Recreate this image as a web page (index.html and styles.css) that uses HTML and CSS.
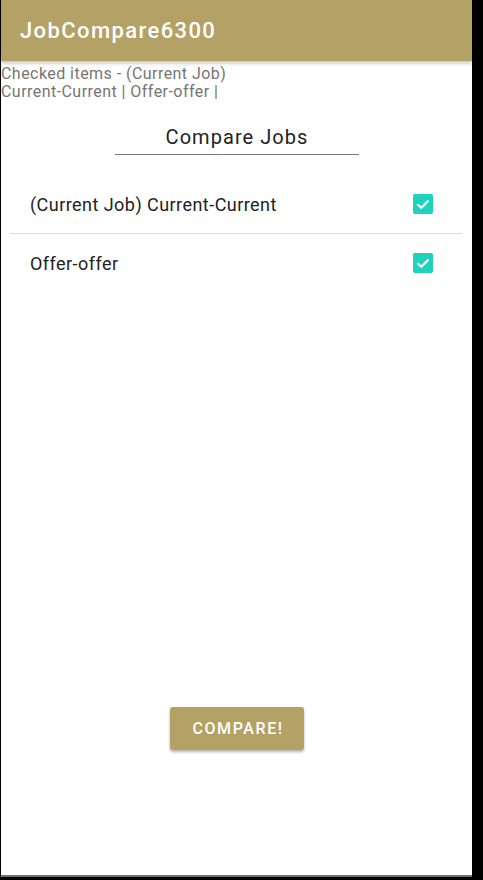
FILE: index.html
```html
<!DOCTYPE html>
<html>
<head>
<meta charset="utf-8">
<link rel="stylesheet" href="styles.css">
</head>
<body>
<div class="screen">
  <header class="appbar"><span class="title">JobCompare6300</span></header>
  <div class="checked">Checked items - (Current Job)<br>Current-Current | Offer-offer |</div>
  <div class="heading-wrap"><div class="heading">Compare Jobs</div></div>
  <ul class="list">
    <li class="row"><span class="label">(Current Job) Current-Current</span><span class="check"><svg viewBox="0 0 20 20" width="20" height="20"><rect x="0" y="0" width="20" height="20" rx="2" fill="#1fd1bf"/><path d="M4.5 10.2 L8.3 13.8 L15.5 6.6" fill="none" stroke="#fff" stroke-width="2.2"/></svg></span></li>
    <li class="row"><span class="label">Offer-offer</span><span class="check"><svg viewBox="0 0 20 20" width="20" height="20"><rect x="0" y="0" width="20" height="20" rx="2" fill="#1fd1bf"/><path d="M4.5 10.2 L8.3 13.8 L15.5 6.6" fill="none" stroke="#fff" stroke-width="2.2"/></svg></span></li>
  </ul>
  <div class="spacer"></div>
  <div class="actions"><button class="btn">COMPARE!</button></div>
</div>
</body>
</html>
```
FILE: styles.css
```css
html, body {
  margin: 0;
  padding: 0;
  background: #000;
}
body {
  width: 483px;
  height: 880px;
  overflow: hidden;
  font-family: Roboto, "Noto Sans", sans-serif;
}
.screen {
  width: 471px;
  margin-left: 1px;
  height: 877px;
  background: #fff;
  border-bottom: 2px solid #6f6f6f;
  display: flex;
  flex-direction: column;
  box-sizing: border-box;
}
.appbar {
  height: 61px;
  background: #b4a166;
  display: flex;
  align-items: center;
  padding-left: 19px;
  box-shadow: 0 2px 4px rgba(0,0,0,0.25);
  position: relative;
  z-index: 1;
}
.title {
  color: #fff;
  font-size: 22px;
  font-weight: 500;
  letter-spacing: 1.4px;
}
.checked {
  margin-top: 4px;
  font-size: 16px;
  line-height: 17.5px;
  color: #757575;
  letter-spacing: 0.45px;
}
.heading-wrap {
  display: flex;
  justify-content: center;
  margin-top: 24px;
}
.heading {
  width: 244px;
  margin-left: 1px;
  text-align: center;
  font-size: 20px;
  line-height: 26px;
  color: #222;
  padding-bottom: 4px;
  border-bottom: 1px solid #7a7a7a;
  letter-spacing: 1.05px;
}
.list {
  list-style: none;
  margin: 20px 0 0 0;
  padding: 0 10px 0 9px;
}
.row {
  display: flex;
  align-items: center;
  justify-content: space-between;
  height: 58px;
  padding-left: 20px;
  padding-right: 29px;
  font-size: 18px;
  letter-spacing: 0.45px;
  color: #222;
}
.row + .row {
  border-top: 1px solid #dcdcdc;
}
.check {
  display: flex;
  width: 20px;
  height: 20px;
}
.spacer {
  flex: 1;
}
.actions {
  display: flex;
  justify-content: center;
  margin-bottom: 125px;
}
.btn {
  width: 134px;
  height: 43px;
  border: none;
  border-radius: 3px;
  background: #b4a166;
  color: #fff;
  font-family: Roboto, "Noto Sans", sans-serif;
  font-size: 16px;
  font-weight: 500;
  letter-spacing: 1.6px;
  box-shadow: 0 2px 3px rgba(0,0,0,0.3);
  padding: 0 0 0 3px;
}
```
